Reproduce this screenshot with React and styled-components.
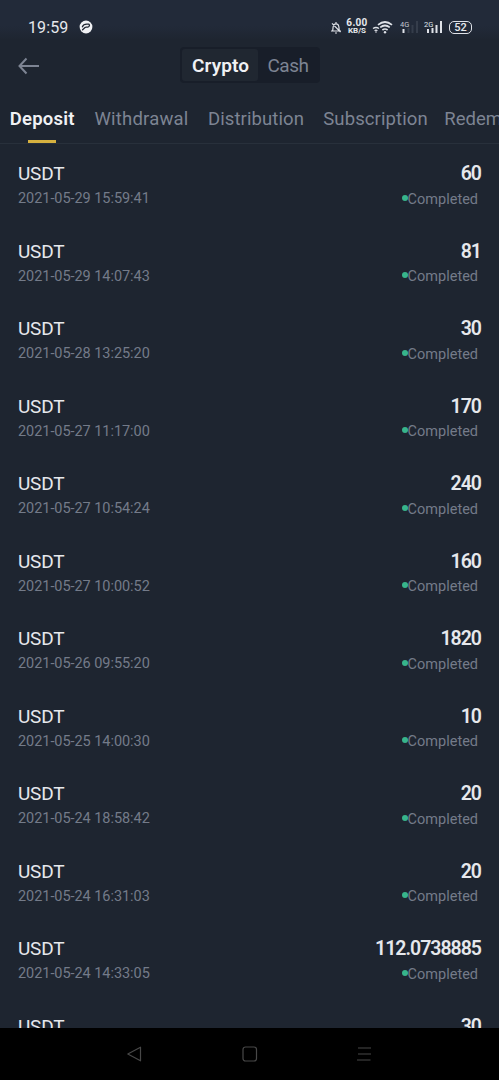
import React from 'react'
import styled, { createGlobalStyle } from 'styled-components'

const GlobalStyle = createGlobalStyle`
    * {
        box-sizing: border-box;
    }
    body {
        margin: 0;
        background: #1e2530;
        font-family: Roboto, "Liberation Sans", sans-serif;
    }
`

const Screen = styled.div`
    width: 100%;
    height: 1080px;
    display: flex;
    flex-direction: column;
    overflow: hidden;
    background: #1e2530;
    color: #e6e8ec;
`
const StatusBar = styled.div`
    height: 40px;
    flex-shrink: 0;
    display: flex;
    align-items: center;
    padding: 14px 27px 0 28px;
    background: linear-gradient(#222a39 65%, #1e2530);
`
const Clock = styled.span`
    width: 51px;
    font-size: 16px;
    letter-spacing: 0.1px;
`
const StatusIcons = styled.div`
    margin-left: auto;
    display: flex;
    align-items: center;
`
const Speed = styled.div`
    width: 22px;
    margin: 0 4px 0 4px;
    font-size: 8px;
    line-height: 8px;
    font-weight: 700;
    text-align: center;
    white-space: nowrap;
`
const SpeedValue = styled.div`
    font-size: 10px;
    letter-spacing: 0.3px;
`
const Signal = styled.svg`
    margin-left: ${props => props.$gap}px;
`
const Battery = styled.div`
    width: 23px;
    height: 13px;
    margin-left: 6px;
    border: 1.5px solid #dfe2e8;
    border-radius: 5px;
    font-size: 11px;
    line-height: 11px;
    font-weight: 500;
    text-align: center;
`
const Header = styled.div`
    height: 52px;
    flex-shrink: 0;
    display: grid;
    grid-template-columns: 162px 140px 1fr;
    align-items: center;
    padding: 0 18px 2px;
`
const BackArrow = styled.svg`
    margin-top: 2px;
`
const Switch = styled.div`
    width: 140px;
    height: 36px;
    display: flex;
    padding: 2px;
    border-radius: 4px;
    background: #181e29;
`
const SwitchItem = styled.div`
    width: ${props => props.$width}px;
    padding-left: ${props => props.$indent}px;
    line-height: 34px;
    font-size: 19px;
    letter-spacing: ${props => props.$spacing}px;
    border-radius: 3px;
    color: ${props => (props.$active ? '#f0f1f4' : '#7d8493')};
    background: ${props => (props.$active ? '#202731' : 'transparent')};
    font-weight: ${props => (props.$active ? 600 : 400)};
`
const Tabs = styled.div`
    height: 52px;
    flex-shrink: 0;
    display: flex;
    gap: 19px;
    padding-left: 9px;
    overflow: hidden;
    border-bottom: 1px solid #28303b;
`
const Tab = styled.div`
    width: ${props => props.$width}px;
    flex-shrink: 0;
    display: flex;
    flex-direction: column;
    align-items: center;
    justify-content: space-between;
    line-height: 54px;
    height: 51px;
    font-size: 18.5px;
    white-space: nowrap;
    letter-spacing: ${props => props.$spacing}px;
    color: ${props => (props.$active ? '#f0f1f4' : '#7d8493')};
    font-weight: ${props => (props.$active ? 600 : 400)};
`
const TabLabel = styled.span`
    height: 48px;
`
const Underline = styled.div`
    width: 28px;
    height: 3px;
    flex-shrink: 0;
    background: #d6b13f;
`
const List = styled.div`
    flex: 1;
    min-height: 0;
    overflow: hidden;
`
const Row = styled.div`
    height: 77.55px;
    display: flex;
    justify-content: space-between;
    padding: 17px 18px 0;
`
const Coin = styled.div`
    font-size: 19px;
    line-height: 25px;
    letter-spacing: -0.2px;
`
const Time = styled.div`
    font-size: 14.5px;
    line-height: 25px;
    letter-spacing: -0.05px;
    color: #747b89;
`
const Right = styled.div`
    display: flex;
    flex-direction: column;
    align-items: flex-end;
`
const Amount = styled.div`
    font-size: 19.5px;
    line-height: 25px;
    font-weight: 600;
    letter-spacing: -1px;
`
const Status = styled.div`
    display: flex;
    align-items: center;
    height: 26px;
    padding-right: 3px;
    font-size: 14.5px;
    color: #747b89;
`
const Dot = styled.span`
    width: 6px;
    height: 6px;
    margin-bottom: 3px;
    border-radius: 50%;
    background: #37b58c;
`
const NavBar = styled.div`
    height: 52px;
    flex-shrink: 0;
    display: flex;
    justify-content: center;
    align-items: center;
    gap: 99px;
    background: #000;
`

const deposits = [
    { amount: '60', time: '2021-05-29 15:59:41' },
    { amount: '81', time: '2021-05-29 14:07:43' },
    { amount: '30', time: '2021-05-28 13:25:20' },
    { amount: '170', time: '2021-05-27 11:17:00' },
    { amount: '240', time: '2021-05-27 10:54:24' },
    { amount: '160', time: '2021-05-27 10:00:52' },
    { amount: '1820', time: '2021-05-26 09:55:20' },
    { amount: '10', time: '2021-05-25 14:00:30' },
    { amount: '20', time: '2021-05-24 18:58:42' },
    { amount: '20', time: '2021-05-24 16:31:03' },
    { amount: '112.0738885', time: '2021-05-24 14:33:05' },
    { amount: '30', time: '' },
]

const tabs = [
    { label: 'Deposit', width: 66.5, spacing: 0.2 },
    { label: 'Withdrawal', width: 94, spacing: 0.2 },
    { label: 'Distribution', width: 97, spacing: 0.1 },
    { label: 'Subscription', width: 104, spacing: 0.1 },
    { label: 'Redemption', width: 95, spacing: 0 },
]

const App = () => {
    return (
        <>
            <GlobalStyle />
            <Screen>
                <StatusBar>
                    <Clock>19:59</Clock>
                    <svg width="14" height="14" viewBox="0 0 14 14">
                        <circle cx="7" cy="7" r="6.4" fill="#f0f1f4" />
                        <path d="M3.4 6.8C4.2 4.4 7 3.8 9.6 4.2c1.4.3 1 2.4-.8 2.9-1.2.3-1.8-.3-2.8.4L3.6 9.8" fill="none" stroke="#202733" strokeWidth="1.3" strokeLinecap="round" />
                    </svg>
                    <StatusIcons>
                        <svg width="12" height="13" viewBox="0 0 12 13" fill="none" stroke="#dfe2e8" strokeWidth="1.2">
                            <path d="M1 10h10M2.6 9.8C3 8.5 2.9 7 3.2 5.5c.6-3.6 5-3.6 5.6 0 .3 1.5.2 3 .6 4.3M6 1v1.8M5 12h2M2 2.4l8.5 8.6" />
                        </svg>
                        <Speed>
                            <SpeedValue>6.00</SpeedValue>
                            KB/S
                        </Speed>
                        <svg width="22" height="14" viewBox="0 0 22 14" fill="none" stroke="#dfe2e8" strokeWidth="1.7">
                            <path d="M1 8.6q3-2.2 6 0M2.6 10.7q1.4-1 2.8 0" strokeWidth="1.3" />
                            <path d="M6 4.8q7-5.6 14 0M8.2 7.4q4.8-3.8 9.6 0M10.4 10q2.6-2 5.2 0" />
                            <circle cx="4" cy="12" r=".8" fill="#dfe2e8" stroke="none" />
                            <circle cx="13" cy="12.2" r="1.2" fill="#dfe2e8" stroke="none" />
                        </svg>
                        <Signal $gap={6} width="19" height="14" viewBox="0 0 19 14">
                            <text x="0" y="6.5" fontSize="7.5" fill="#c3c7d0">4G</text>
                            <path d="M3.5 9v4" stroke="#dfe2e8" strokeWidth="2" />
                            <path d="M8.5 8v5M12.5 5v8M17 1v12" stroke="#353d4b" strokeWidth="2" />
                        </Signal>
                        <Signal $gap={5} width="19" height="14" viewBox="0 0 19 14">
                            <text x="0" y="6.5" fontSize="7.5" fill="#dfe2e8">2G</text>
                            <path d="M4 9v4M8.5 8v5M12.5 5v8M17 1v12" stroke="#dfe2e8" strokeWidth="2" />
                        </Signal>
                        <Battery>52</Battery>
                    </StatusIcons>
                </StatusBar>
                <Header>
                    <BackArrow width="22" height="18" viewBox="0 0 22 18" fill="none" stroke="#7d8493" strokeWidth="2">
                        <path d="M21 9H2M8.5 1.5 1.5 9l7 7.5" />
                    </BackArrow>
                    <Switch>
                        <SwitchItem $active $width={76} $indent={10} $spacing={0.1}>Crypto</SwitchItem>
                        <SwitchItem $width={60} $indent={9.5} $spacing={-0.5}>Cash</SwitchItem>
                    </Switch>
                </Header>
                <Tabs>
                    {tabs.map((tab, i) => (
                        <Tab key={tab.label} $active={i === 0} $width={tab.width} $spacing={tab.spacing}>
                            <TabLabel>{tab.label}</TabLabel>
                            {i === 0 && <Underline />}
                        </Tab>
                    ))}
                </Tabs>
                <List>
                    {deposits.map((item, i) => (
                        <Row key={i}>
                            <div>
                                <Coin>USDT</Coin>
                                <Time>{item.time}</Time>
                            </div>
                            <Right>
                                <Amount>{item.amount}</Amount>
                                {item.time && <Status><Dot />Completed</Status>}
                            </Right>
                        </Row>
                    ))}
                </List>
                <NavBar>
                    <svg width="16" height="16" viewBox="0 0 16 16" fill="none" stroke="#484848" strokeWidth="1.2" strokeLinejoin="round">
                        <path d="M13.5 1.2v13.6L0.8 8z" />
                    </svg>
                    <svg width="16" height="16" viewBox="0 0 16 16" fill="none" stroke="#484848" strokeWidth="1.2">
                        <rect x="1" y="1" width="13.5" height="14" rx="2.5" />
                    </svg>
                    <svg width="16" height="16" viewBox="0 0 16 16" fill="none" stroke="#484848" strokeWidth="1.2">
                        <path d="M1 2h13M1 8h13M0 14h13.5" />
                    </svg>
                </NavBar>
            </Screen>
        </>
    )
}

export default App
